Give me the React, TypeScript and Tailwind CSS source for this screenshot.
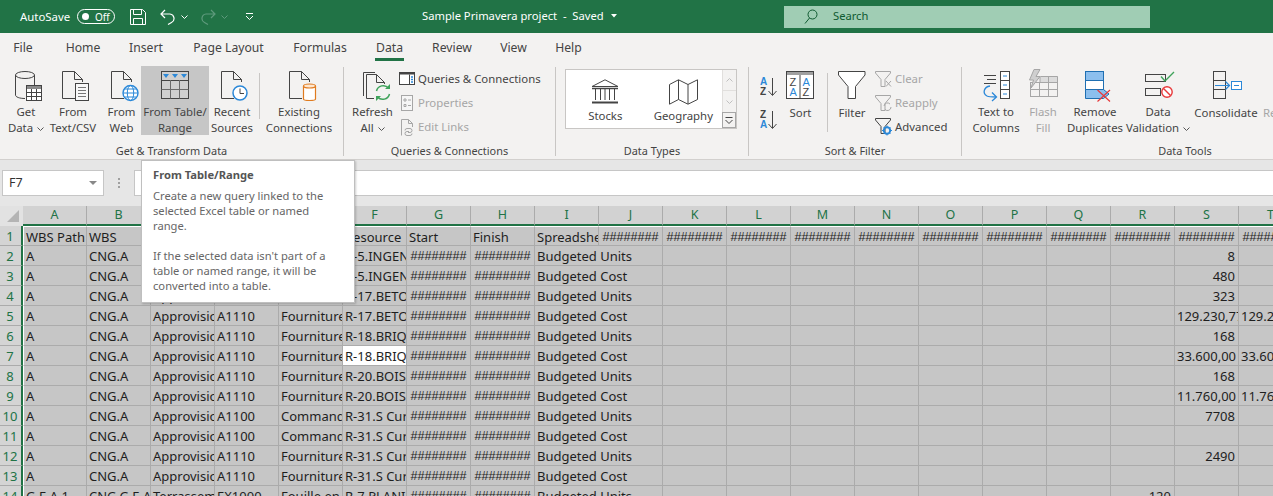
import React from "react";

const D = "#444444";
const G = "#a6a6a6";
const B = "#2b88d8";

function Doc({ x, c = D, fold = 8 }: { x: number; c?: string; fold?: number }) {
  return (
    <g fill="none" stroke={c}>
      <path d={`M${x + 0.5} 71.5H${x + 12.5}L${x + 12.5 + fold} ${71.5 + fold}V82`} />
      <path d={`M${x + 0.5} 71.5V98.5H${x + 13}`} />
      <path d={`M${x + 12.5} 71.5V${71.5 + fold}H${x + 12.5 + fold}`} />
    </g>
  );
}

function Ic({ vb, children, w, h }: { vb: string; children: React.ReactNode; w: number; h: number }) {
  return (
    <svg width={w} height={h} viewBox={vb} className="block shrink-0">
      {children}
    </svg>
  );
}

const IconGetData = () => (
  <Ic vb="6 66 40 38" w={40} h={38}>
    <g fill="none" stroke={D}>
      <ellipse cx="25" cy="75" rx="9.5" ry="3.5" />
      <path d="M15.5 75V95c0 2 4 3.5 9.5 3.5" />
      <path d="M34.5 75V85" />
    </g>
    <rect x="26.5" y="85.5" width="15" height="15" fill="#fff" stroke={D} />
    <rect x="27" y="86" width="14" height="3" fill="#8a8a8a" />
    <path d="M26.5 92.5H41.5M26.5 96.5H41.5M31.5 89V100.5M36.5 89V100.5" stroke={D} fill="none" />
  </Ic>
);
const IconText = () => (
  <Ic vb="53 66 40 38" w={40} h={38}>
    <Doc x={62} />
    <rect x="75.5" y="83.5" width="13" height="17" fill="#f8f8f8" stroke={D} />
    <path d="M78 87.5H86M78 90.5H86M78 93.5H86M78 96.5H86" stroke="#777" fill="none" />
  </Ic>
);
const IconWeb = () => (
  <Ic vb="100 66 40 38" w={40} h={38}>
    <Doc x={109} />
    <circle cx="128.5" cy="93" r="7.5" fill="#fff" stroke={B} strokeWidth="1.4" />
    <ellipse cx="128.5" cy="93" rx="3.2" ry="7.5" fill="none" stroke={B} />
    <path d="M121 93H136M122.3 89H134.7M122.3 97H134.7" stroke={B} fill="none" />
  </Ic>
);
const IconTable = () => (
  <Ic vb="155 66 40 38" w={40} h={38}>
    <rect x="161.5" y="71.5" width="27" height="27" fill="#cfcfcf" stroke={D} />
    <path d="M161.5 80.5H188.5" stroke={D} />
    <path d="M161.5 89.5H188.5M170.5 80V98.5M179.5 80V98.5" stroke="#6a6a6a" />
    <path d="M163 74H169L166 78ZM172 74H178L175 78ZM181 74H187L184 78Z" fill={B} />
  </Ic>
);
const IconRecent = () => (
  <Ic vb="212 66 40 38" w={40} h={38}>
    <Doc x={221} />
    <circle cx="240" cy="93" r="7" fill="#fff" stroke={B} strokeWidth="1.5" />
    <path d="M240 88.5V93.5H244" stroke="#444" fill="none" />
  </Ic>
);
const IconExisting = () => (
  <Ic vb="279 66 40 38" w={40} h={38}>
    <Doc x={289} />
    <path d="M303.5 86V99a6 1.5 0 0 0 12 0V86" fill="#fff" stroke="#e07b1f" strokeWidth="1.2" />
    <ellipse cx="309.5" cy="86" rx="6" ry="2" fill="#fde7d1" stroke="#e07b1f" strokeWidth="1.2" />
  </Ic>
);
const IconRefresh = () => (
  <Ic vb="353 66 40 38" w={40} h={38}>
    <path d="M363.5 96V72.5H375" stroke={D} fill="none" />
    <g fill="none" stroke={D}>
      <path d="M366.5 98.5V74.5H376.5L384.5 82.5V84" />
      <path d="M376.5 74.5V82.5H384.5" />
      <path d="M366.5 98.5H374" />
    </g>
    <path d="M376.5 91a7 7 0 0 1 12-3" fill="none" stroke="#3fa35b" strokeWidth="1.5" />
    <path d="M389.5 94a7 7 0 0 1-12 3" fill="none" stroke="#3fa35b" strokeWidth="1.5" />
    <path d="M390 84V89H385ZM376 101V96H381Z" fill="#3fa35b" />
  </Ic>
);
const IconQueries = () => (
  <svg width="17" height="14" viewBox="0 0 17 14" className="block shrink-0">
    <rect x="0.5" y="0.5" width="15" height="12" fill="#fff" stroke={D} />
    <rect x="0.5" y="0.5" width="15" height="2" fill={D} />
    <path d="M10.5 2.5V12.5" stroke={D} />
    <path d="M12 5H14M12 7.5H14M12 10H14" stroke={B} strokeWidth="1.5" />
  </svg>
);
const IconProps = () => (
  <svg width="17" height="16" viewBox="0 0 17 16" className="block shrink-0">
    <rect x="2.5" y="0.5" width="11" height="15" fill="#f6f6f6" stroke={G} />
    <path d="M5 4H7V6H5ZM5 9.5H7V11.5H5ZM9 5H12M9 10.5H12" fill="none" stroke={G} />
  </svg>
);
const IconEditLinks = () => (
  <svg width="17" height="17" viewBox="0 0 17 17" className="block shrink-0">
    <path d="M2.5 16.5V.5H9.5L13.5 4.5V8M9.5.5V4.5H13.5" fill="none" stroke={G} />
    <path d="M6 11.5a2 2 0 0 1 2-2h3a2 2 0 0 1 0 4H9M13 14.5a2 2 0 0 1-2 2H8a2 2 0 0 1 0-4h2" fill="none" stroke={G} />
  </svg>
);
const IconBank = () => (
  <svg width="28" height="26" viewBox="0 0 28 26" className="block">
    <path d="M14 .8L27 7.5H1Z" fill="none" stroke={D} />
    <path d="M1 9.5H27" stroke={D} strokeWidth="1.5" />
    <path d="M4.5 10V21M9.5 10V21M14 10V21M18.5 10V21M23.5 10V21" stroke={D} fill="none" />
    <path d="M1 23.5H27" stroke={D} strokeWidth="2" />
  </svg>
);
const IconMap = () => (
  <svg width="29" height="26" viewBox="0 0 29 26" className="block">
    <path d="M.5 5.5L9.5.8L19 5.5L28.5.8V20.5L19 25.2L9.5 20.5L.5 25.2Z" fill="none" stroke={D} />
    <path d="M9.5 1V20.5M19 5.5V25" stroke={D} fill="none" />
  </svg>
);
const letter = { fontFamily: "'Liberation Sans',sans-serif", fontWeight: 700, fontSize: 10 } as const;
const IconSortAZ = ({ rev }: { rev?: boolean }) => (
  <svg width="18" height="23" viewBox="0 0 18 23" className="block">
    <text x="0" y="10" fill={rev ? D : B} style={letter}>{rev ? "Z" : "A"}</text>
    <text x="0" y="20" fill={rev ? B : D} style={letter}>{rev ? "A" : "Z"}</text>
    <path d="M12.5 3V20M8.5 16L12.5 20.5L16.5 16" fill="none" stroke={D} />
  </svg>
);
const IconSort = () => (
  <svg width="29" height="29" viewBox="0 0 29 29" className="block">
    <rect x="0.5" y="0.5" width="27" height="27" fill="#fff" stroke={D} />
    <rect x="1" y="1" width="26" height="3" fill="#a0a0a0" />
    <path d="M14 4V27.5" stroke={D} />
    <text x="3.5" y="15" fill={D} style={{ ...letter, fontWeight: 400, fontSize: 11 }}>Z</text>
    <text x="3.5" y="25" fill={B} style={{ ...letter, fontWeight: 400, fontSize: 11 }}>A</text>
    <text x="16.5" y="15" fill={B} style={{ ...letter, fontWeight: 400, fontSize: 11 }}>A</text>
    <text x="16.5" y="25" fill={D} style={{ ...letter, fontWeight: 400, fontSize: 11 }}>Z</text>
  </svg>
);
const IconFilter = () => (
  <svg width="28" height="29" viewBox="0 0 28 29" className="block">
    <path d="M.5 .5H27V4L17.5 15.5V27.5H10V15.5L.5 4Z" fill="#fff" stroke={D} />
  </svg>
);
const SmallFunnel = ({ c }: { c: string }) => (
  <path d="M.5 .5H15.5V2L10 8.5V15.5H6V8.5L.5 2Z" fill="none" stroke={c} />
);
const IconClear = () => (
  <svg width="18" height="17" viewBox="0 0 18 17" className="block shrink-0">
    <SmallFunnel c={G} />
    <path d="M11 10L16 15.5M16 10L11 15.5" stroke={G} fill="none" />
  </svg>
);
const IconReapply = () => (
  <svg width="18" height="17" viewBox="0 0 18 17" className="block shrink-0">
    <SmallFunnel c={G} />
    <path d="M9 11a3.5 3.5 0 0 1 6-2M16 12a3.5 3.5 0 0 1-6 2.5" stroke={G} fill="none" />
  </svg>
);
const IconAdvanced = () => (
  <svg width="18" height="18" viewBox="0 0 18 18" className="block shrink-0">
    <SmallFunnel c={D} />
    <circle cx="12" cy="12.5" r="3.2" fill="none" stroke={B} strokeWidth="2" />
    <path d="M12 7.5V9M12 16V17.5M7 12.5H8.5M15.5 12.5H17M8.5 9L9.5 10M14.5 15L15.5 16M8.5 16L9.5 15M14.5 10L15.5 9" stroke={B} />
  </svg>
);
const IconTextCols = () => (
  <Ic vb="977 66 38 38" w={38} h={38}>
    <path d="M984 75.5H996M987 79.5H996M984 83.5H996" stroke={D} fill="none" />
    <rect x="1000.5" y="71.5" width="9" height="27" fill="#fff" stroke={D} />
    <path d="M1000.5 80.5H1009.5M1000.5 89.5H1009.5" stroke={D} />
    <path d="M1003 76H1007M1003 85H1007M1003 94H1007" stroke={B} />
    <path d="M990 86C984 87 982 93 987 96C989 97 993 97 996 97" fill="none" stroke={B} strokeWidth="1.3" />
    <path d="M992 92.5L996.5 97L992 101" fill="none" stroke={B} strokeWidth="1.3" />
  </Ic>
);
const IconFlash = () => (
  <Ic vb="1024 66 38 38" w={38} h={38}>
    <rect x="1040" y="76" width="18" height="7" fill="#dcdcdc" />
    <rect x="1030.5" y="82.5" width="27" height="14" fill="none" stroke={G} />
    <path d="M1040.5 76.5H1057.5V96.5M1039.5 82.5V96.5M1048.5 76.5V96.5M1030.5 89.5H1057.5M1040 76.5V82" fill="none" stroke={G} />
    <path d="M1034 69.5H1040L1036 76.5H1040L1031 88L1033.5 80H1029.5Z" fill="#cfcfcf" stroke={G} />
  </Ic>
);
const IconRemove = () => (
  <Ic vb="1076 66 38 38" w={38} h={38}>
    <rect x="1085.5" y="71.5" width="18" height="9" fill="#8cbfee" stroke="#1f6fb2" />
    <rect x="1085.5" y="80.5" width="18" height="9" fill="#fff" stroke="#1f6fb2" />
    <path d="M1085.5 89.5H1103.5L1109 94L1103.5 98.5H1085.5Z" fill="#8cbfee" stroke="#1f6fb2" />
    <path d="M1097.5 90L1110 101.5M1110 90L1097.5 101.5" stroke="#e8393a" strokeWidth="1.2" fill="none" />
  </Ic>
);
const IconValid = () => (
  <Ic vb="1139 66 38 38" w={38} h={38}>
    <rect x="1145.5" y="74.5" width="20" height="7" fill="none" stroke={D} />
    <rect x="1145.5" y="88.5" width="15" height="7" fill="none" stroke={D} />
    <path d="M1161 76.5L1165 81L1174 72" fill="none" stroke="#3fa35b" strokeWidth="1.4" />
    <circle cx="1167" cy="92" r="5.2" fill="#fff" stroke="#e8393a" strokeWidth="1.4" />
    <path d="M1163.5 88.5L1170.5 95.5" stroke="#e8393a" strokeWidth="1.4" />
  </Ic>
);
const IconConsol = () => (
  <svg width="30" height="30" viewBox="0 0 30 30" className="block mt-[5px] ml-[4px]">
    <rect x="0.5" y="0.5" width="12" height="9" fill="none" stroke={D} />
    <rect x="0.5" y="9.5" width="12" height="9" fill="none" stroke={D} />
    <rect x="0.5" y="18.5" width="12" height="9" fill="none" stroke={D} />
    <path d="M2 14.5H16M12.5 10.5L16.5 14.5L12.5 18.5" fill="none" stroke={B} strokeWidth="1.2" />
    <rect x="18.5" y="10.5" width="10" height="8" fill="#fff" stroke={B} />
    <path d="M21 14.5H26" stroke={B} />
  </svg>
);

const Chev = ({ c = "#555" }: { c?: string }) => (
  <svg width="7" height="4" viewBox="0 0 7 4" className="inline-block ml-[4px] align-middle">
    <path d="M.5 .5L3.5 3.5L6.5 .5" fill="none" stroke={c} />
  </svg>
);

function Big({
  w,
  icon,
  l1,
  l2,
  chev,
  active,
  dis,
  cn,
}: {
  w: string;
  icon: React.ReactNode;
  l1: string;
  l2?: string;
  chev?: boolean;
  active?: boolean;
  dis?: boolean;
  cn?: string;
}) {
  return (
    <div
      className={`${w} ${cn ?? ""} shrink-0 h-[69px] flex flex-col items-center ${active ? "bg-[#c6c6c6]" : ""} ${
        dis ? "text-[#a6a6a6]" : "text-[#444444]"
      }`}
    >
      <div className="h-[39px] flex items-start justify-center">{icon}</div>
      <div className="h-[16px] leading-[16px] whitespace-nowrap">{l1}</div>
      {l2 && (
        <div className="h-[16px] leading-[16px] whitespace-nowrap">
          {l2}
          {chev && <Chev />}
        </div>
      )}
    </div>
  );
}

function Small({ icon, label, dis }: { icon: React.ReactNode; label: string; dis?: boolean }) {
  return (
    <div className={`h-[24px] flex items-center gap-[3px] whitespace-nowrap ${dis ? "text-[#a6a6a6]" : "text-[#444444]"}`}>
      <div className="w-[16px] flex justify-center">{icon}</div>
      <span>{label}</span>
    </div>
  );
}

function Group({ w, label, children }: { w: string; label: string; children: React.ReactNode }) {
  return (
    <div className={`${w} shrink-0 h-[89px] border-r border-[#c8c6c4]`}>
      <div className="h-[77px] flex items-start -mt-[1px]">{children}</div>
      <div className="h-[16px] leading-[16px] text-[#444444] text-center whitespace-nowrap text-[10.9px]">{label}</div>
    </div>
  );
}

const tabs: [string, string][] = [
  ["File", "w-[46px]"],
  ["Home", "w-[74px]"],
  ["Insert", "w-[52px]"],
  ["Page Layout", "w-[113px]"],
  ["Formulas", "w-[70px]"],
  ["Data", "w-[69px]"],
  ["Review", "w-[56px]"],
  ["View", "w-[67px]"],
  ["Help", "w-[43px]"],
];

const colL = "ABCDEFGHIJKLMNOPQRST".split("");
const hash = "########";

type R = [string, string, string, string, string, string, string, string, string];
const rows: R[] = [
  ["A", "CNG.A", "Approvisionnement", "A1110", "Fourniture", "R-5.INGENIEUR", hash, hash, "Budgeted Units"],
  ["A", "CNG.A", "Approvisionnement", "A1110", "Fourniture", "R-5.INGENIEUR", hash, hash, "Budgeted Cost"],
  ["A", "CNG.A", "Approvisionnement", "A1110", "Fourniture", "R-17.BETON", hash, hash, "Budgeted Units"],
  ["A", "CNG.A", "Approvisionnement", "A1110", "Fourniture", "R-17.BETON", hash, hash, "Budgeted Cost"],
  ["A", "CNG.A", "Approvisionnement", "A1110", "Fourniture", "R-18.BRIQUES", hash, hash, "Budgeted Units"],
  ["A", "CNG.A", "Approvisionnement", "A1110", "Fourniture", "R-18.BRIQUES", hash, hash, "Budgeted Cost"],
  ["A", "CNG.A", "Approvisionnement", "A1110", "Fourniture", "R-20.BOIS", hash, hash, "Budgeted Units"],
  ["A", "CNG.A", "Approvisionnement", "A1110", "Fourniture", "R-20.BOIS", hash, hash, "Budgeted Cost"],
  ["A", "CNG.A", "Approvisionnement", "A1100", "Commande", "R-31.S Curieux", hash, hash, "Budgeted Units"],
  ["A", "CNG.A", "Approvisionnement", "A1100", "Commande", "R-31.S Curieux", hash, hash, "Budgeted Cost"],
  ["A", "CNG.A", "Approvisionnement", "A1110", "Fourniture", "R-31.S Curieux", hash, hash, "Budgeted Units"],
  ["A", "CNG.A", "Approvisionnement", "A1110", "Fourniture", "R-31.S Curieux", hash, hash, "Budgeted Cost"],
  ["G.E.A.1", "CNG.G.E.A.1", "Terrassement", "EX1000", "Fouille en", "R-7.PLANI", hash, hash, "Budgeted Units"],
];
const sVals = ["8", "480", "323", "129.230,77", "168", "33.600,00", "168", "11.760,00", "7708", "", "2490", "", ""];
const tVals = ["", "", "", "129.230,77", "", "33.600,00", "", "11.760,00", "", "", "", "", ""];

const cell = "h-[20px] border-r border-b border-[#ababab] overflow-hidden whitespace-nowrap leading-[20px] bg-[#c6c6c6] text-[#1e1e1e]";
const hashCls = "text-center text-[12.6px] font-['Liberation_Sans',sans-serif]";
const rowHead =
  "h-[20px] border-r-2 border-r-[#217346] border-b border-b-[#ababab] bg-[#d4d4d4] text-[#217346] text-center leading-[20px] pr-[1px]";

export default function App() {
  return (
    <div className="relative w-[1273px] h-[496px] overflow-hidden bg-[#e6e6e6] text-[11.4px] font-['Noto_Sans',sans-serif]">
      {/* title bar */}
      <div className="h-[33px] bg-[#217346] flex items-center text-white">
        <span className="ml-[20px] w-[57px] text-[11.4px]">AutoSave</span>
        <div className="w-[38px] h-[15px] rounded-full border border-white flex items-center pl-[4px] gap-[6px]">
          <span className="w-[7px] h-[7px] rounded-full bg-white" />
          <span className="text-[10px] leading-none">Off</span>
        </div>
        <svg width="16" height="16" viewBox="0 0 16 16" className="ml-[15px]">
          <path d="M.5 .5H12.5L15.5 3.5V15.5H.5Z M3.5 .5V5.5H11.5V.5 M3.5 15.5V9.5H12.5V15.5" fill="none" stroke="#fff" />
        </svg>
        <svg width="16" height="16" viewBox="0 0 16 16" className="ml-[14px]">
          <path d="M5 1L1 5L5 9M1.5 5H10a4.5 4.5 0 0 1 1.5 8.5L8 15.5" fill="none" stroke="#fff" strokeWidth="1.2" />
        </svg>
        <svg width="7" height="4" viewBox="0 0 7 4" className="ml-[5px]">
          <path d="M.5 .5L3.5 3.5L6.5 .5" fill="none" stroke="#fff" />
        </svg>
        <svg width="16" height="16" viewBox="0 0 16 16" className="ml-[12px]">
          <path d="M11 1L15 5L11 9M14.5 5H6a4.5 4.5 0 0 0-1.5 8.5L8 15.5" fill="none" stroke="#5e9a7c" strokeWidth="1.2" />
        </svg>
        <svg width="7" height="4" viewBox="0 0 7 4" className="ml-[5px]">
          <path d="M.5 .5L3.5 3.5L6.5 .5" fill="none" stroke="#5e9a7c" />
        </svg>
        <svg width="9" height="8" viewBox="0 0 9 8" className="ml-[17px]">
          <path d="M1 .5H8M1 3L4.5 6.5L8 3" fill="none" stroke="#fff" />
        </svg>
        <span className="ml-[168px] w-[200px] shrink-0 text-[11.2px] whitespace-nowrap flex items-center">
          Sample Primavera project&nbsp; -&nbsp; Saved
          <svg width="6" height="4" viewBox="0 0 6 4" className="ml-[7px]">
            <path d="M0 0H6L3 3.5Z" fill="#fff" />
          </svg>
        </span>
        <div className="ml-[162px] w-[366px] h-[22px] bg-[#a0cdb4] flex items-center text-[#0f5a31] text-[11.2px]">
          <svg width="14" height="16" viewBox="0 0 14 16" className="ml-[20px]">
            <circle cx="8.5" cy="5.5" r="4.5" fill="none" stroke="#0f5a31" />
            <path d="M5.5 9L1 14.5" stroke="#0f5a31" fill="none" />
          </svg>
          <span className="ml-[15px]">Search</span>
        </div>
      </div>

      {/* tabs */}
      <div className="h-[32px] bg-[#f3f2f1] flex items-start text-[#444444] text-[12.2px]">
        {tabs.map(([t, w]) => (
          <div key={t} className={`${w} h-[28px] flex flex-col items-center pt-[6px] leading-[18px]`}>
            <span>{t}</span>
            {t === "Data" && <span className="mt-[1px] w-[29px] h-[3px] bg-[#217346]" />}
          </div>
        ))}
      </div>

      {/* ribbon */}
      <div className="h-[95px] bg-[#f3f2f1] border-b border-[#d2d0ce] flex pt-[2px]">
        <Group w="w-[344px]" label="Get & Transform Data">
          <div className="w-[8px] shrink-0" />
          <Big w="w-[36px]" icon={<IconGetData />} l1="Get" l2="Data" chev />
          <Big w="w-[58px]" icon={<IconText />} l1="From" l2="Text/CSV" />
          <Big w="w-[39px]" icon={<IconWeb />} l1="From" l2="Web" />
          <Big w="w-[68px]" icon={<IconTable />} l1="From Table/" l2="Range" active />
          <Big w="w-[46px]" icon={<IconRecent />} l1="Recent" l2="Sources" />
          <div className="ml-[4px] mt-[7px] w-px h-[46px] bg-[#c8c6c4] shrink-0" />
          <Big w="w-[78px]" icon={<IconExisting />} l1="Existing" l2="Connections" />
        </Group>

        <Group w="w-[212px]" label="Queries & Connections">
          <Big w="w-[53px]" cn="ml-[2px]" icon={<IconRefresh />} l1="Refresh" l2="All" chev />
          <div className="flex flex-col mt-[1px]">
            <Small icon={<IconQueries />} label="Queries & Connections" />
            <Small icon={<IconProps />} label="Properties" dis />
            <Small icon={<IconEditLinks />} label="Edit Links" dis />
          </div>
        </Group>

        <Group w="w-[193px]" label="Data Types">
          <div className="ml-[9px] mt-[3px] w-[172px] h-[60px] border border-[#c8c6c4] bg-white flex text-[#444444]">
            <div className="w-[79px] flex flex-col items-center pt-[9px]">
              <IconBank />
              <span className="mt-[3px] leading-[16px]">Stocks</span>
            </div>
            <div className="w-[78px] flex flex-col items-center pt-[9px]">
              <IconMap />
              <span className="mt-[3px] leading-[16px]">Geography</span>
            </div>
            <div className="w-[14px] flex flex-col bg-[#f3f2f1] border-l border-[#e1dfdd]">
              <div className="h-[21px] border-b border-[#e1dfdd] flex items-center justify-center">
                <svg width="7" height="4" viewBox="0 0 7 4"><path d="M.5 3.5L3.5 .5L6.5 3.5" fill="none" stroke="#c0c0c0" /></svg>
              </div>
              <div className="h-[21px] flex items-center justify-center">
                <svg width="7" height="4" viewBox="0 0 7 4"><path d="M.5 .5L3.5 3.5L6.5 .5" fill="none" stroke="#c0c0c0" /></svg>
              </div>
              <div className="flex-1 -ml-px border border-[#a6a6a6] bg-[#f3f2f1] flex items-center justify-center">
                <svg width="8" height="7" viewBox="0 0 8 7"><path d="M.5 .5H7.5M.5 3L4 6.5L7.5 3" fill="none" stroke="#444" /></svg>
              </div>
            </div>
          </div>
        </Group>

        <Group w="w-[213px]" label="Sort & Filter">
          <div className="ml-[11px] mt-[9px] flex flex-col gap-[10px]">
            <IconSortAZ />
            <IconSortAZ rev />
          </div>
          <Big w="w-[29px]" cn="ml-[8px]" icon={<div className="pt-[5px]"><IconSort /></div>} l1="Sort" />
          <div className="ml-[12px] mt-[7px] w-px h-[59px] bg-[#c8c6c4] shrink-0" />
          <Big w="w-[28px]" cn="ml-[10px]" icon={<div className="pt-[5px]"><IconFilter /></div>} l1="Filter" />
          <div className="ml-[10px] mt-[1px] flex flex-col">
            <Small icon={<IconClear />} label="Clear" dis />
            <Small icon={<IconReapply />} label="Reapply" dis />
            <Small icon={<IconAdvanced />} label="Advanced" />
          </div>
        </Group>

        <div className="flex-1 h-[89px]">
          <div className="h-[77px] flex items-start -mt-[1px]">
            <Big w="w-[68px]" icon={<IconTextCols />} l1="Text to" l2="Columns" />
            <Big w="w-[26px]" icon={<IconFlash />} l1="Flash" l2="Fill" dis />
            <Big w="w-[78px]" icon={<IconRemove />} l1="Remove" l2="Duplicates" />
            <Big w="w-[48px]" icon={<IconValid />} l1="Data" l2="Validation" chev />
            <Big w="w-[66px]" cn="ml-[11px]" icon={<IconConsol />} l1="Consolidate" />
            <Big w="w-[60px]" cn="ml-[4px] !items-start" icon={<span />} l1="Relationships" dis />
          </div>
          <div className="h-[16px] leading-[16px] text-[#444444] text-center w-[446px] text-[10.9px]">Data Tools</div>
        </div>
      </div>

      {/* formula bar */}
      <div className="h-[46px] bg-[#e6e6e6] flex pt-[10px]">
        <div className="ml-[2px] w-[102px] h-[26px] bg-white border border-[#c6c6c6] flex items-center justify-between pl-[6px] pr-[6px] text-[#333] text-[12.5px]">
          <span>F7</span>
          <svg width="8" height="4" viewBox="0 0 8 4"><path d="M0 0H8L4 4Z" fill="#888" /></svg>
        </div>
        <div className="w-[30px] h-[26px] flex flex-col items-center justify-center gap-[2px]">
          <span className="w-[2px] h-[2px] bg-[#a0a0a0]" />
          <span className="w-[2px] h-[2px] bg-[#a0a0a0]" />
          <span className="w-[2px] h-[2px] bg-[#a0a0a0]" />
        </div>
        <div className="flex-1 h-[26px] bg-white border border-[#c6c6c6] border-r-0" />
      </div>

      {/* sheet */}
      <div className="grid grid-cols-[23px_repeat(20,64px)] auto-rows-[20px] w-[1303px] text-[13px]">
        <div className="h-[20px] bg-[#e2e2e2] flex items-start justify-start pl-[7px] pt-[4px]">
          <svg width="12" height="12" viewBox="0 0 12 12"><path d="M12 0V12H0Z" fill="#b4b4b4" /></svg>
        </div>
        {colL.map((c) => (
          <div key={c} className="h-[20px] bg-[#d2d2d2] border-r border-[#ababab] border-b-2 border-b-[#217346] text-center text-[#217346] text-[12.5px] leading-[18px]">
            {c}
          </div>
        ))}

        <div className={rowHead}>1</div>
        {["WBS Path", "WBS", "", "", "", "Resource", "Start", "Finish", "Spreadsheet Field"].map((t, i) => (
          <div key={i} className={`${cell} border-t border-t-white leading-[19px] pl-[2px] ${i === 0 ? "border-l border-l-white" : ""}`}>
            {t}
          </div>
        ))}
        {colL.slice(9).map((c) => (
          <div key={c} className={`${cell} border-t border-t-white leading-[19px] ${hashCls}`}>
            {hash}
          </div>
        ))}

        {rows.map((r, i) => {
          const n = i + 2;
          return (
            <React.Fragment key={n}>
              <div className={rowHead}>{n}</div>
              {r.map((t, j) => {
                const isActive = n === 7 && j === 5;
                const isHash = j === 6 || j === 7;
                return (
                  <div
                    key={j}
                    className={`${cell} ${j === 0 ? "border-l border-l-white" : ""} ${isHash ? hashCls : "pl-[2px]"} ${
                      j === 8 ? "col-span-2" : ""
                    } ${isActive ? "!bg-white" : ""}`}
                  >
                    {t}
                  </div>
                );
              })}
              {colL.slice(10, 17).map((c) => (
                <div key={c} className={cell} />
              ))}
              <div className={`${cell} text-right pr-[3px]`}>{n === 14 ? "120" : ""}</div>
              <div className={`${cell} ${sVals[i].length > 8 ? "pl-[2px]" : "text-right pr-[3px]"}`}>{sVals[i]}</div>
              <div className={`${cell} pl-[2px]`}>{tVals[i]}</div>
            </React.Fragment>
          );
        })}
      </div>

      {/* tooltip */}
      <div className="absolute left-[141px] top-[160px] w-[214px] h-[143px] bg-white border border-[#bfbfbf] shadow-[1px_1px_2px_rgba(0,0,0,0.2)] pl-[11px] pt-[6px] text-[#666666] text-[11.2px] leading-[15px]">
        <div className="font-bold text-[11.2px] text-[#555555] leading-[16px] mb-[5px]">From Table/Range</div>
        <div>Create a new query linked to the</div>
        <div>selected Excel table or named</div>
        <div>range.</div>
        <div className="mt-[15px]">If the selected data isn't part of a</div>
        <div>table or named range, it will be</div>
        <div>converted into a table.</div>
      </div>
    </div>
  );
}
